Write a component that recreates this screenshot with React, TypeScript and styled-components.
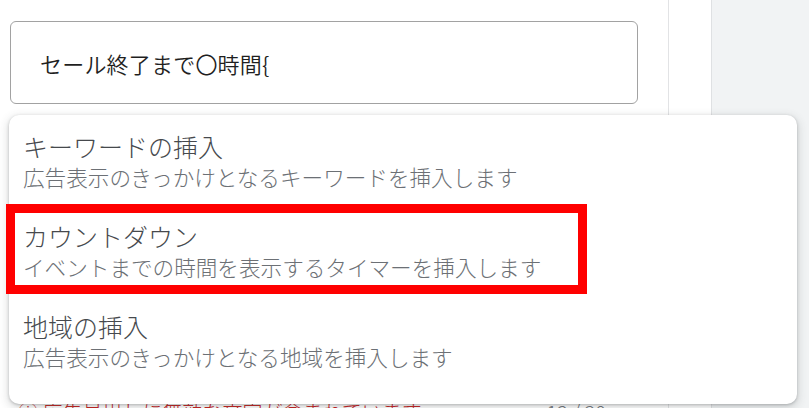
import React from "react";
import styled, { createGlobalStyle, css } from "styled-components";

const GlobalStyle = createGlobalStyle`
  html, body {
    margin: 0;
    padding: 0;
    background: #ffffff;
    overflow: hidden;
  }
  body {
    font-family: "Noto Sans CJK JP", "Noto Sans", sans-serif;
  }
  *, *::before, *::after { box-sizing: border-box; }
`;

const Page = styled.div`
  display: flex;
  width: 809px;
  height: 408px;
  background: #ffffff;
  overflow: hidden;
`;

const Main = styled.div`
  position: relative;
  flex-shrink: 0;
  width: 669px;
  height: 100%;
  margin-right: 42px;
  padding: 21px 0 0 10px;
  border-right: 1px solid #e2e3e5;
  display: flex;
  flex-direction: column;
`;

const SidePanel = styled.div`
  flex: 1;
  height: 100%;
  background: #f1f3f4;
  border-left: 1px solid #dfe1e3;
`;

const InputBox = styled.div`
  flex-shrink: 0;
  width: 628px;
  height: 83px;
  border: 1.5px solid #a2a2a2;
  border-radius: 6px;
  display: flex;
  align-items: center;
  padding-left: 29px;
  font-size: 22px;
  font-weight: 350;
  color: #1f1f1f;
  letter-spacing: 0.2px;
`;

const HelperRow = styled.div`
  flex-shrink: 0;
  width: 628px;
  margin-top: 298px;
  display: flex;
  justify-content: space-between;
  padding: 0 32px 0 8px;
  font-size: 20px;
  line-height: 20px;
  font-weight: 300;
`;

const ErrorText = styled.span`
  color: #c5221f;
`;

const Counter = styled.span`
  color: #70757a;
`;

const Menu = styled.div`
  position: absolute;
  left: 9px;
  top: 115px;
  width: 788px;
  height: 289px;
  background: #ffffff;
  border-radius: 10px;
  box-shadow: 0 1px 3px rgba(60, 64, 67, 0.3), 0 3px 8px 2px rgba(60, 64, 67, 0.15);
  padding: 1px 0 18px;
  display: flex;
  flex-direction: column;
`;

const Item = styled.div<{ $highlighted?: boolean }>`
  position: relative;
  height: 90px;
  padding: 14px 14px;
  display: flex;
  flex-direction: column;
  ${(p) =>
    p.$highlighted &&
    css`
      &::after {
        content: "";
        position: absolute;
        left: -3px;
        top: -2px;
        width: 581px;
        height: 90px;
        border: 9px solid #ff0000;
      }
    `}
`;

const ItemTitle = styled.div`
  font-size: 25px;
  line-height: 32px;
  font-weight: 300;
  color: #46494d;
  white-space: nowrap;
`;

const ItemDesc = styled.div`
  font-size: 21.6px;
  line-height: 30px;
  font-weight: 300;
  color: #6c7075;
  white-space: nowrap;
`;

const items = [
  {
    title: "キーワードの挿入",
    desc: "広告表示のきっかけとなるキーワードを挿入します",
  },
  {
    title: "カウントダウン",
    desc: "イベントまでの時間を表示するタイマーを挿入します",
    highlighted: true,
  },
  {
    title: "地域の挿入",
    desc: "広告表示のきっかけとなる地域を挿入します",
  },
];

export default function App() {
  return (
    <>
      <GlobalStyle />
      <Page>
        <Main>
          <InputBox>セール終了まで〇時間{"{"}</InputBox>
          <HelperRow>
            <ErrorText>ⓘ 広告見出しに無効な文字が含まれています</ErrorText>
            <Counter>12 / 30</Counter>
          </HelperRow>
          <Menu>
            {items.map((it) => (
              <Item key={it.title} $highlighted={it.highlighted}>
                <ItemTitle>{it.title}</ItemTitle>
                <ItemDesc>{it.desc}</ItemDesc>
              </Item>
            ))}
          </Menu>
        </Main>
        <SidePanel />
      </Page>
    </>
  );
}
